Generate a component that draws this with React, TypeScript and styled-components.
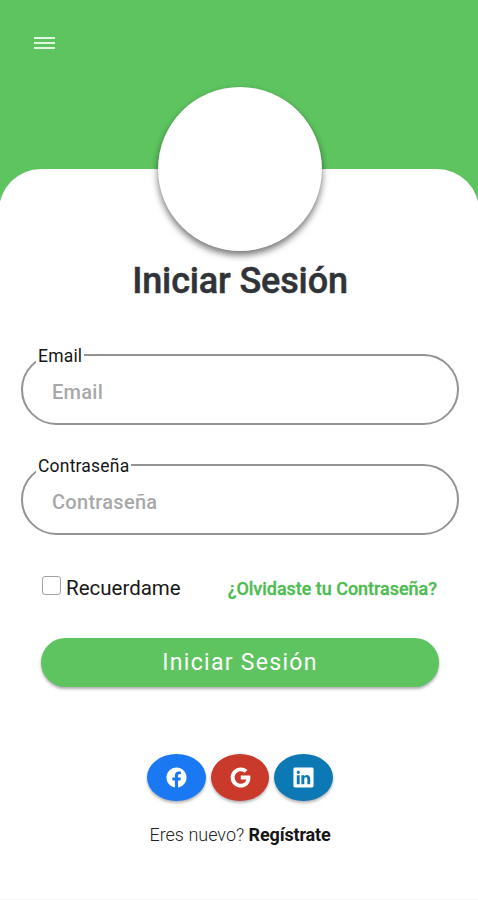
import React, { useState } from 'react';
import styled, { createGlobalStyle } from 'styled-components';
import { IoLogoFacebook, IoLogoGoogle, IoLogoLinkedin } from 'react-icons/io5';

const GlobalStyle = createGlobalStyle`
  *, *::before, *::after { box-sizing: border-box; }
  body { margin: 0; font-family: Roboto, sans-serif; background: #fff; }
  button, input { font: inherit; }
`;

const Screen = styled.main`
  display: flex;
  flex-direction: column;
  width: 478px;
  height: 900px;
  overflow: hidden;
  background: #5ec460;
  border-bottom: 1px solid #f4f4f4;
`;

const TopBar = styled.header`
  flex: none;
  height: 169px;
  padding: 37px 0 0 34px;
`;

const MenuButton = styled.button`
  display: flex;
  flex-direction: column;
  gap: 3px;
  width: 21px;
  padding: 0;
  border: 0;
  background: none;
`;

const MenuLine = styled.span`
  height: 2px;
  background: #e0f6e0;
`;

const Sheet = styled.section`
  flex: 1;
  display: flex;
  flex-direction: column;
  margin: 0 -1px;
  padding: 0 20px 0 22px;
  background: #fff;
  border-radius: 42px 42px 0 0;
`;

const Avatar = styled.div`
  flex: none;
  align-self: center;
  width: 164px;
  height: 164px;
  margin-top: -82px;
  border-radius: 50%;
  background: #fff;
  box-shadow: 0 4px 7px rgba(0, 0, 0, 0.55);
`;

const Title = styled.h1`
  margin: 9px 0 0;
  text-align: center;
  font-size: 36px;
  line-height: 42px;
  font-weight: 500;
  letter-spacing: -0.15px;
  -webkit-text-stroke: 0.5px #303338;
  color: #303338;
  white-space: nowrap;
`;

const Form = styled.form`
  display: flex;
  flex-direction: column;
  margin-top: 52px;
`;

const Field = styled.label`
  position: relative;
  display: flex;
  height: 71px;
  margin-bottom: 39px;
  border: 2px solid #939393;
  border-radius: 36px;
`;

const FieldName = styled.span`
  position: absolute;
  left: 13px;
  top: -9px;
  padding: 0 2px;
  background: #fff;
  color: #151515;
  font-size: 17.5px;
  line-height: 18px;
  letter-spacing: 0.2px;
  white-space: nowrap;
`;

const FieldInput = styled.input`
  width: 100%;
  padding: 4px 29px 0;
  border: 0;
  outline: 0;
  border-radius: 34px;
  background: transparent;
  color: #333;
  font-size: 20px;
  font-weight: 500;
  letter-spacing: 0.28px;
  &::placeholder { color: #a8a8a8; opacity: 1; }
`;

const Options = styled.div`
  display: flex;
  align-items: center;
  justify-content: space-between;
  height: 26px;
  margin-top: 1px;
  padding: 0 22px 0 21px;
`;

const Remember = styled.label`
  display: flex;
  align-items: center;
  gap: 5px;
  color: #181818;
  font-size: 20.5px;
  white-space: nowrap;
`;

const Checkbox = styled.input`
  appearance: none;
  width: 19px;
  height: 19px;
  margin: -6px 0 0;
  border: 1.5px solid #a2a2a2;
  border-radius: 3px;
  background: #fff;
  &:checked { background: #5ec460; }
`;

const Forgot = styled.a`
  color: #4cbc50;
  font-size: 18px;
  font-weight: 500;
  letter-spacing: -0.03px;
  -webkit-text-stroke: 0.3px #4cbc50;
  white-space: nowrap;
`;

const Submit = styled.button`
  height: 49px;
  margin: 37px 20px 0 20px;
  padding: 0 0 1px;
  border: 0;
  border-radius: 25px;
  background: #5ec460;
  box-shadow: 0 2px 3px rgba(0, 0, 0, 0.32);
  color: #fff;
  font-size: 23px;
  letter-spacing: 1.3px;
`;

const Socials = styled.nav`
  display: flex;
  justify-content: center;
  gap: 5px;
  margin-top: 67px;
`;

const SocialButton = styled.button<{ $color: string }>`
  display: flex;
  align-items: center;
  justify-content: center;
  width: 58.5px;
  height: 47px;
  padding: 0;
  border: 0;
  border-radius: 50%;
  background: ${(p) => p.$color};
  box-shadow: 0 2px 3px rgba(0, 0, 0, 0.3);
  color: #fff;
  font-size: 23px;
`;

const SignUp = styled.p`
  margin: 24px 0 0;
  text-align: center;
  color: #222;
  font-size: 18px;
  line-height: 20px;
  font-weight: 300;
  white-space: nowrap;
`;

const SignUpLink = styled.a`
  color: #161616;
  font-weight: 700;
  letter-spacing: -0.15px;
`;

export default function App() {
  const [remember, setRemember] = useState(false);
  return (
    <>
      <GlobalStyle />
      <Screen>
        <TopBar>
          <MenuButton aria-label="Menú">
            <MenuLine />
            <MenuLine />
            <MenuLine />
          </MenuButton>
        </TopBar>
        <Sheet>
          <Avatar />
          <Title>Iniciar Sesión</Title>
          <Form onSubmit={(e) => e.preventDefault()}>
            <Field>
              <FieldName>Email</FieldName>
              <FieldInput type="email" placeholder="Email" />
            </Field>
            <Field>
              <FieldName>Contraseña</FieldName>
              <FieldInput type="password" placeholder="Contraseña" />
            </Field>
            <Options>
              <Remember>
                <Checkbox type="checkbox" checked={remember} onChange={() => setRemember(!remember)} />
                Recuerdame
              </Remember>
              <Forgot>¿Olvidaste tu Contraseña?</Forgot>
            </Options>
            <Submit type="submit">Iniciar Sesión</Submit>
          </Form>
          <Socials>
            <SocialButton $color="#1978f2" aria-label="Facebook"><IoLogoFacebook /></SocialButton>
            <SocialButton $color="#c93a2b" aria-label="Google"><IoLogoGoogle /></SocialButton>
            <SocialButton $color="#0c78b4" aria-label="LinkedIn"><IoLogoLinkedin /></SocialButton>
          </Socials>
          <SignUp>Eres nuevo? <SignUpLink>Regístrate</SignUpLink></SignUp>
        </Sheet>
      </Screen>
    </>
  );
}
